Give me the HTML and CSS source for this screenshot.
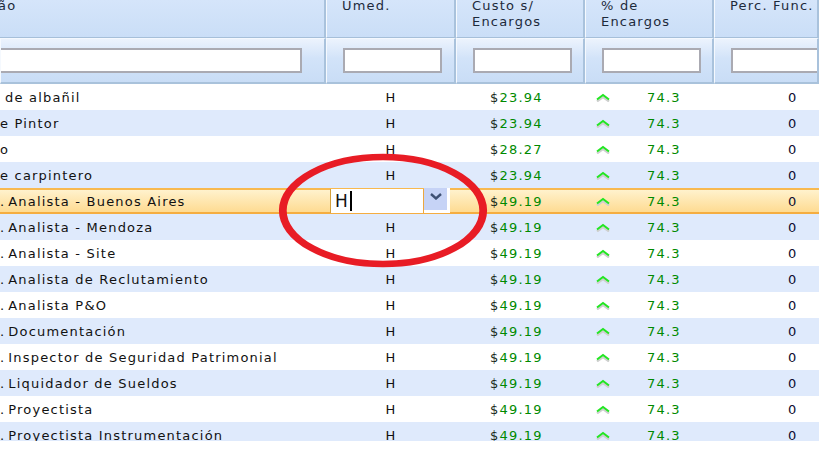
FILE: index.html
```html
<!DOCTYPE html>
<html lang="es">
<head>
    <meta charset="UTF-8">
    <title>Funciones - Encargos</title>
    <link rel="stylesheet" href="styles.css">
</head>
<body>
    <div class="grid">
        <div class="row head">
            <div class="cell c1"><div class="label cut">ão</div></div>
            <div class="cell"><div class="label">Umed.</div></div>
            <div class="cell"><div class="label">Custo s/<br>Encargos</div></div>
            <div class="cell"><div class="label">% de<br>Encargos</div></div>
            <div class="cell"><div class="label">Perc. Func.</div></div>
        </div>

        <div class="row filter">
            <div class="cell c1"><input type="text" class="f-wide"></div>
            <div class="cell"><input type="text"></div>
            <div class="cell"><input type="text"></div>
            <div class="cell"><input type="text"></div>
            <div class="cell"><input type="text"></div>
        </div>

        <div class="rows">
            <div class="row item">
                <div class="name first">de albañil</div>
                <div class="unit">H</div>
                <div class="cost"><span class="cur">$</span>23.94</div>
                <div class="pct"><svg class="up" viewBox="0 0 16 9"><polyline points="2,8.5 8,4 14,8.5" fill="none" stroke="#cfcfcf" stroke-width="2.2"/><polyline points="2,6.5 8,2 14,6.5" fill="none" stroke="#22e622" stroke-width="2"/></svg><span>74.3</span></div>
                <div class="perc">0</div>
            </div>
            <div class="row item alt">
                <div class="name">e Pintor</div>
                <div class="unit">H</div>
                <div class="cost"><span class="cur">$</span>23.94</div>
                <div class="pct"><svg class="up" viewBox="0 0 16 9"><polyline points="2,8.5 8,4 14,8.5" fill="none" stroke="#cfcfcf" stroke-width="2.2"/><polyline points="2,6.5 8,2 14,6.5" fill="none" stroke="#22e622" stroke-width="2"/></svg><span>74.3</span></div>
                <div class="perc">0</div>
            </div>
            <div class="row item">
                <div class="name">o</div>
                <div class="unit">H</div>
                <div class="cost"><span class="cur">$</span>28.27</div>
                <div class="pct"><svg class="up" viewBox="0 0 16 9"><polyline points="2,8.5 8,4 14,8.5" fill="none" stroke="#cfcfcf" stroke-width="2.2"/><polyline points="2,6.5 8,2 14,6.5" fill="none" stroke="#22e622" stroke-width="2"/></svg><span>74.3</span></div>
                <div class="perc">0</div>
            </div>
            <div class="row item alt">
                <div class="name">e carpintero</div>
                <div class="unit">H</div>
                <div class="cost"><span class="cur">$</span>23.94</div>
                <div class="pct"><svg class="up" viewBox="0 0 16 9"><polyline points="2,8.5 8,4 14,8.5" fill="none" stroke="#cfcfcf" stroke-width="2.2"/><polyline points="2,6.5 8,2 14,6.5" fill="none" stroke="#22e622" stroke-width="2"/></svg><span>74.3</span></div>
                <div class="perc">0</div>
            </div>
            <div class="row item sel">
                <div class="name"><span class="lead">. </span>Analista - Buenos Aires</div>
                <div class="unit editing">
                    <div class="editor">
                        <div class="edit-box"><span class="caret">H</span></div>
                        <div class="edit-btn">
                            <svg viewBox="0 0 12 7"><path d="M1 1 L6 5.5 L11 1" fill="none" stroke="#3e5074" stroke-width="2.4"/></svg>
                        </div>
                    </div>
                </div>
                <div class="cost"><span class="cur">$</span>49.19</div>
                <div class="pct"><svg class="up" viewBox="0 0 16 9"><polyline points="2,8.5 8,4 14,8.5" fill="none" stroke="#cfcfcf" stroke-width="2.2"/><polyline points="2,6.5 8,2 14,6.5" fill="none" stroke="#22e622" stroke-width="2"/></svg><span>74.3</span></div>
                <div class="perc">0</div>
            </div>
            <div class="row item alt">
                <div class="name"><span class="lead">. </span>Analista - Mendoza</div>
                <div class="unit">H</div>
                <div class="cost"><span class="cur">$</span>49.19</div>
                <div class="pct"><svg class="up" viewBox="0 0 16 9"><polyline points="2,8.5 8,4 14,8.5" fill="none" stroke="#cfcfcf" stroke-width="2.2"/><polyline points="2,6.5 8,2 14,6.5" fill="none" stroke="#22e622" stroke-width="2"/></svg><span>74.3</span></div>
                <div class="perc">0</div>
            </div>
            <div class="row item">
                <div class="name"><span class="lead">. </span>Analista - Site</div>
                <div class="unit">H</div>
                <div class="cost"><span class="cur">$</span>49.19</div>
                <div class="pct"><svg class="up" viewBox="0 0 16 9"><polyline points="2,8.5 8,4 14,8.5" fill="none" stroke="#cfcfcf" stroke-width="2.2"/><polyline points="2,6.5 8,2 14,6.5" fill="none" stroke="#22e622" stroke-width="2"/></svg><span>74.3</span></div>
                <div class="perc">0</div>
            </div>
            <div class="row item alt">
                <div class="name"><span class="lead">. </span>Analista de Reclutamiento</div>
                <div class="unit">H</div>
                <div class="cost"><span class="cur">$</span>49.19</div>
                <div class="pct"><svg class="up" viewBox="0 0 16 9"><polyline points="2,8.5 8,4 14,8.5" fill="none" stroke="#cfcfcf" stroke-width="2.2"/><polyline points="2,6.5 8,2 14,6.5" fill="none" stroke="#22e622" stroke-width="2"/></svg><span>74.3</span></div>
                <div class="perc">0</div>
            </div>
            <div class="row item">
                <div class="name"><span class="lead">. </span>Analista P&amp;O</div>
                <div class="unit">H</div>
                <div class="cost"><span class="cur">$</span>49.19</div>
                <div class="pct"><svg class="up" viewBox="0 0 16 9"><polyline points="2,8.5 8,4 14,8.5" fill="none" stroke="#cfcfcf" stroke-width="2.2"/><polyline points="2,6.5 8,2 14,6.5" fill="none" stroke="#22e622" stroke-width="2"/></svg><span>74.3</span></div>
                <div class="perc">0</div>
            </div>
            <div class="row item alt">
                <div class="name"><span class="lead">. </span>Documentación</div>
                <div class="unit">H</div>
                <div class="cost"><span class="cur">$</span>49.19</div>
                <div class="pct"><svg class="up" viewBox="0 0 16 9"><polyline points="2,8.5 8,4 14,8.5" fill="none" stroke="#cfcfcf" stroke-width="2.2"/><polyline points="2,6.5 8,2 14,6.5" fill="none" stroke="#22e622" stroke-width="2"/></svg><span>74.3</span></div>
                <div class="perc">0</div>
            </div>
            <div class="row item">
                <div class="name"><span class="lead">. </span>Inspector de Seguridad Patrimonial</div>
                <div class="unit">H</div>
                <div class="cost"><span class="cur">$</span>49.19</div>
                <div class="pct"><svg class="up" viewBox="0 0 16 9"><polyline points="2,8.5 8,4 14,8.5" fill="none" stroke="#cfcfcf" stroke-width="2.2"/><polyline points="2,6.5 8,2 14,6.5" fill="none" stroke="#22e622" stroke-width="2"/></svg><span>74.3</span></div>
                <div class="perc">0</div>
            </div>
            <div class="row item alt">
                <div class="name"><span class="lead">. </span>Liquidador de Sueldos</div>
                <div class="unit">H</div>
                <div class="cost"><span class="cur">$</span>49.19</div>
                <div class="pct"><svg class="up" viewBox="0 0 16 9"><polyline points="2,8.5 8,4 14,8.5" fill="none" stroke="#cfcfcf" stroke-width="2.2"/><polyline points="2,6.5 8,2 14,6.5" fill="none" stroke="#22e622" stroke-width="2"/></svg><span>74.3</span></div>
                <div class="perc">0</div>
            </div>
            <div class="row item">
                <div class="name"><span class="lead">. </span>Proyectista</div>
                <div class="unit">H</div>
                <div class="cost"><span class="cur">$</span>49.19</div>
                <div class="pct"><svg class="up" viewBox="0 0 16 9"><polyline points="2,8.5 8,4 14,8.5" fill="none" stroke="#cfcfcf" stroke-width="2.2"/><polyline points="2,6.5 8,2 14,6.5" fill="none" stroke="#22e622" stroke-width="2"/></svg><span>74.3</span></div>
                <div class="perc">0</div>
            </div>
            <div class="row item alt">
                <div class="name"><span class="lead">. </span>Proyectista Instrumentación</div>
                <div class="unit">H</div>
                <div class="cost"><span class="cur">$</span>49.19</div>
                <div class="pct"><svg class="up" viewBox="0 0 16 9"><polyline points="2,8.5 8,4 14,8.5" fill="none" stroke="#cfcfcf" stroke-width="2.2"/><polyline points="2,6.5 8,2 14,6.5" fill="none" stroke="#22e622" stroke-width="2"/></svg><span>74.3</span></div>
                <div class="perc">0</div>
            </div>
        </div>

        <!-- marca a mano sobre la celda en edición -->
        <svg class="mark" viewBox="0 0 212 120">
            <g transform="translate(106 59.5) scale(1.2 1)">
                <ellipse rx="83.5" ry="53.5" fill="none" stroke="#e81c25" stroke-width="6.5"/>
            </g>
        </svg>
    </div>
</body>
</html>
```

FILE: styles.css
```css
* {
    margin: 0;
    padding: 0;
    box-sizing: border-box;
}

body {
    font-family: "DejaVu Sans", Verdana, sans-serif;
    font-size: 13px;
    letter-spacing: 1.2px;
    color: #111;
    background: #fff;
}

.grid {
    position: relative;
    height: 441px;
    overflow: hidden;
}

.row {
    display: grid;
    grid-template-columns: 326px 130px 129px 129px 1fr;
}

/* cabecera */
.head .cell {
    height: 38px;
    padding-left: 15px;
    line-height: 16px;
    color: #1d2a3b;
    background: linear-gradient(#d5e5fa, #cadef7);
    border-left: 1px solid #f5f9fe;
    border-right: 2px solid #a9c2dc;
    border-bottom: 1px solid #a6bfd9;
    overflow: hidden;
    white-space: nowrap;
}

.head .c1,
.filter .c1 {
    border-left: none;
    padding-left: 0;
}

.head .label {
    margin-top: -2px;
}

.head .cut {
    margin-left: -2px;
}

/* fila de filtros */
.filter .cell {
    height: 46px;
    display: flex;
    align-items: center;
    padding-left: 16px;
    background: linear-gradient(#ecf3fd, #d2e3f9 45%, #c9ddf6);
    border-top: 1px solid #f4f8fe;
    border-left: 1px solid #f5f9fe;
    border-right: 2px solid #a9c2dc;
    border-bottom: 2px solid #a9c2db;
    overflow: hidden;
}

.filter input {
    width: 99px;
    height: 25px;
    border: 2px solid #aaaab2;
    background: #fff;
    outline: none;
}

.filter .f-wide {
    width: 305px;
    margin-left: -20px;
}

/* filas de datos */
.item {
    height: 26px;
    align-items: center;
    white-space: nowrap;
    background: #fff;
}

.item.alt {
    background: #dfeafc;
}

.item.sel {
    background: linear-gradient(#fff2cd, #fedb92);
    border-top: 2px solid #f8b94f;
    border-bottom: 2px solid #f5ad40;
}

.name {
    overflow: hidden;
}

.name.first {
    padding-left: 5px;
}

.lead {
    letter-spacing: 0;
}

.unit {
    text-align: center;
}

.cost {
    padding-left: 34px;
    color: #008a00;
}

.cost .cur {
    color: #1a2a1a;
}

.pct {
    display: flex;
    align-items: center;
    padding-left: 10px;
    color: #008a00;
}

.pct .up {
    width: 16px;
    height: 9px;
}

.pct span {
    margin-left: 36px;
}

.perc {
    padding-left: 74px;
    color: #0c0c30;
}

/* editor en la celda */
.unit.editing {
    text-align: left;
}

.editor {
    display: flex;
    height: 24px;
    margin: -1px 0 -1px 4px;
}

.edit-box {
    width: 94px;
    background: #fff;
    border-left: 1px solid #d4a03c;
    border-right: 1px solid #eca740;
    padding-left: 4px;
    font-size: 17px;
    line-height: 24px;
    letter-spacing: 0;
    color: #111;
}

.caret {
    padding-right: 2px;
    border-right: 2px solid #000;
}

.edit-btn {
    width: 26px;
    height: 25px;
    margin-top: -1px;
    background: #c6d3f6;
    border-right: 3px solid #fff;
    border-bottom: 3px solid #fff;
    display: flex;
    justify-content: center;
    padding-top: 5px;
}

.edit-btn svg {
    width: 12px;
    height: 7px;
}

.mark {
    position: absolute;
    left: 277px;
    top: 151px;
    width: 212px;
    height: 120px;
}
```
